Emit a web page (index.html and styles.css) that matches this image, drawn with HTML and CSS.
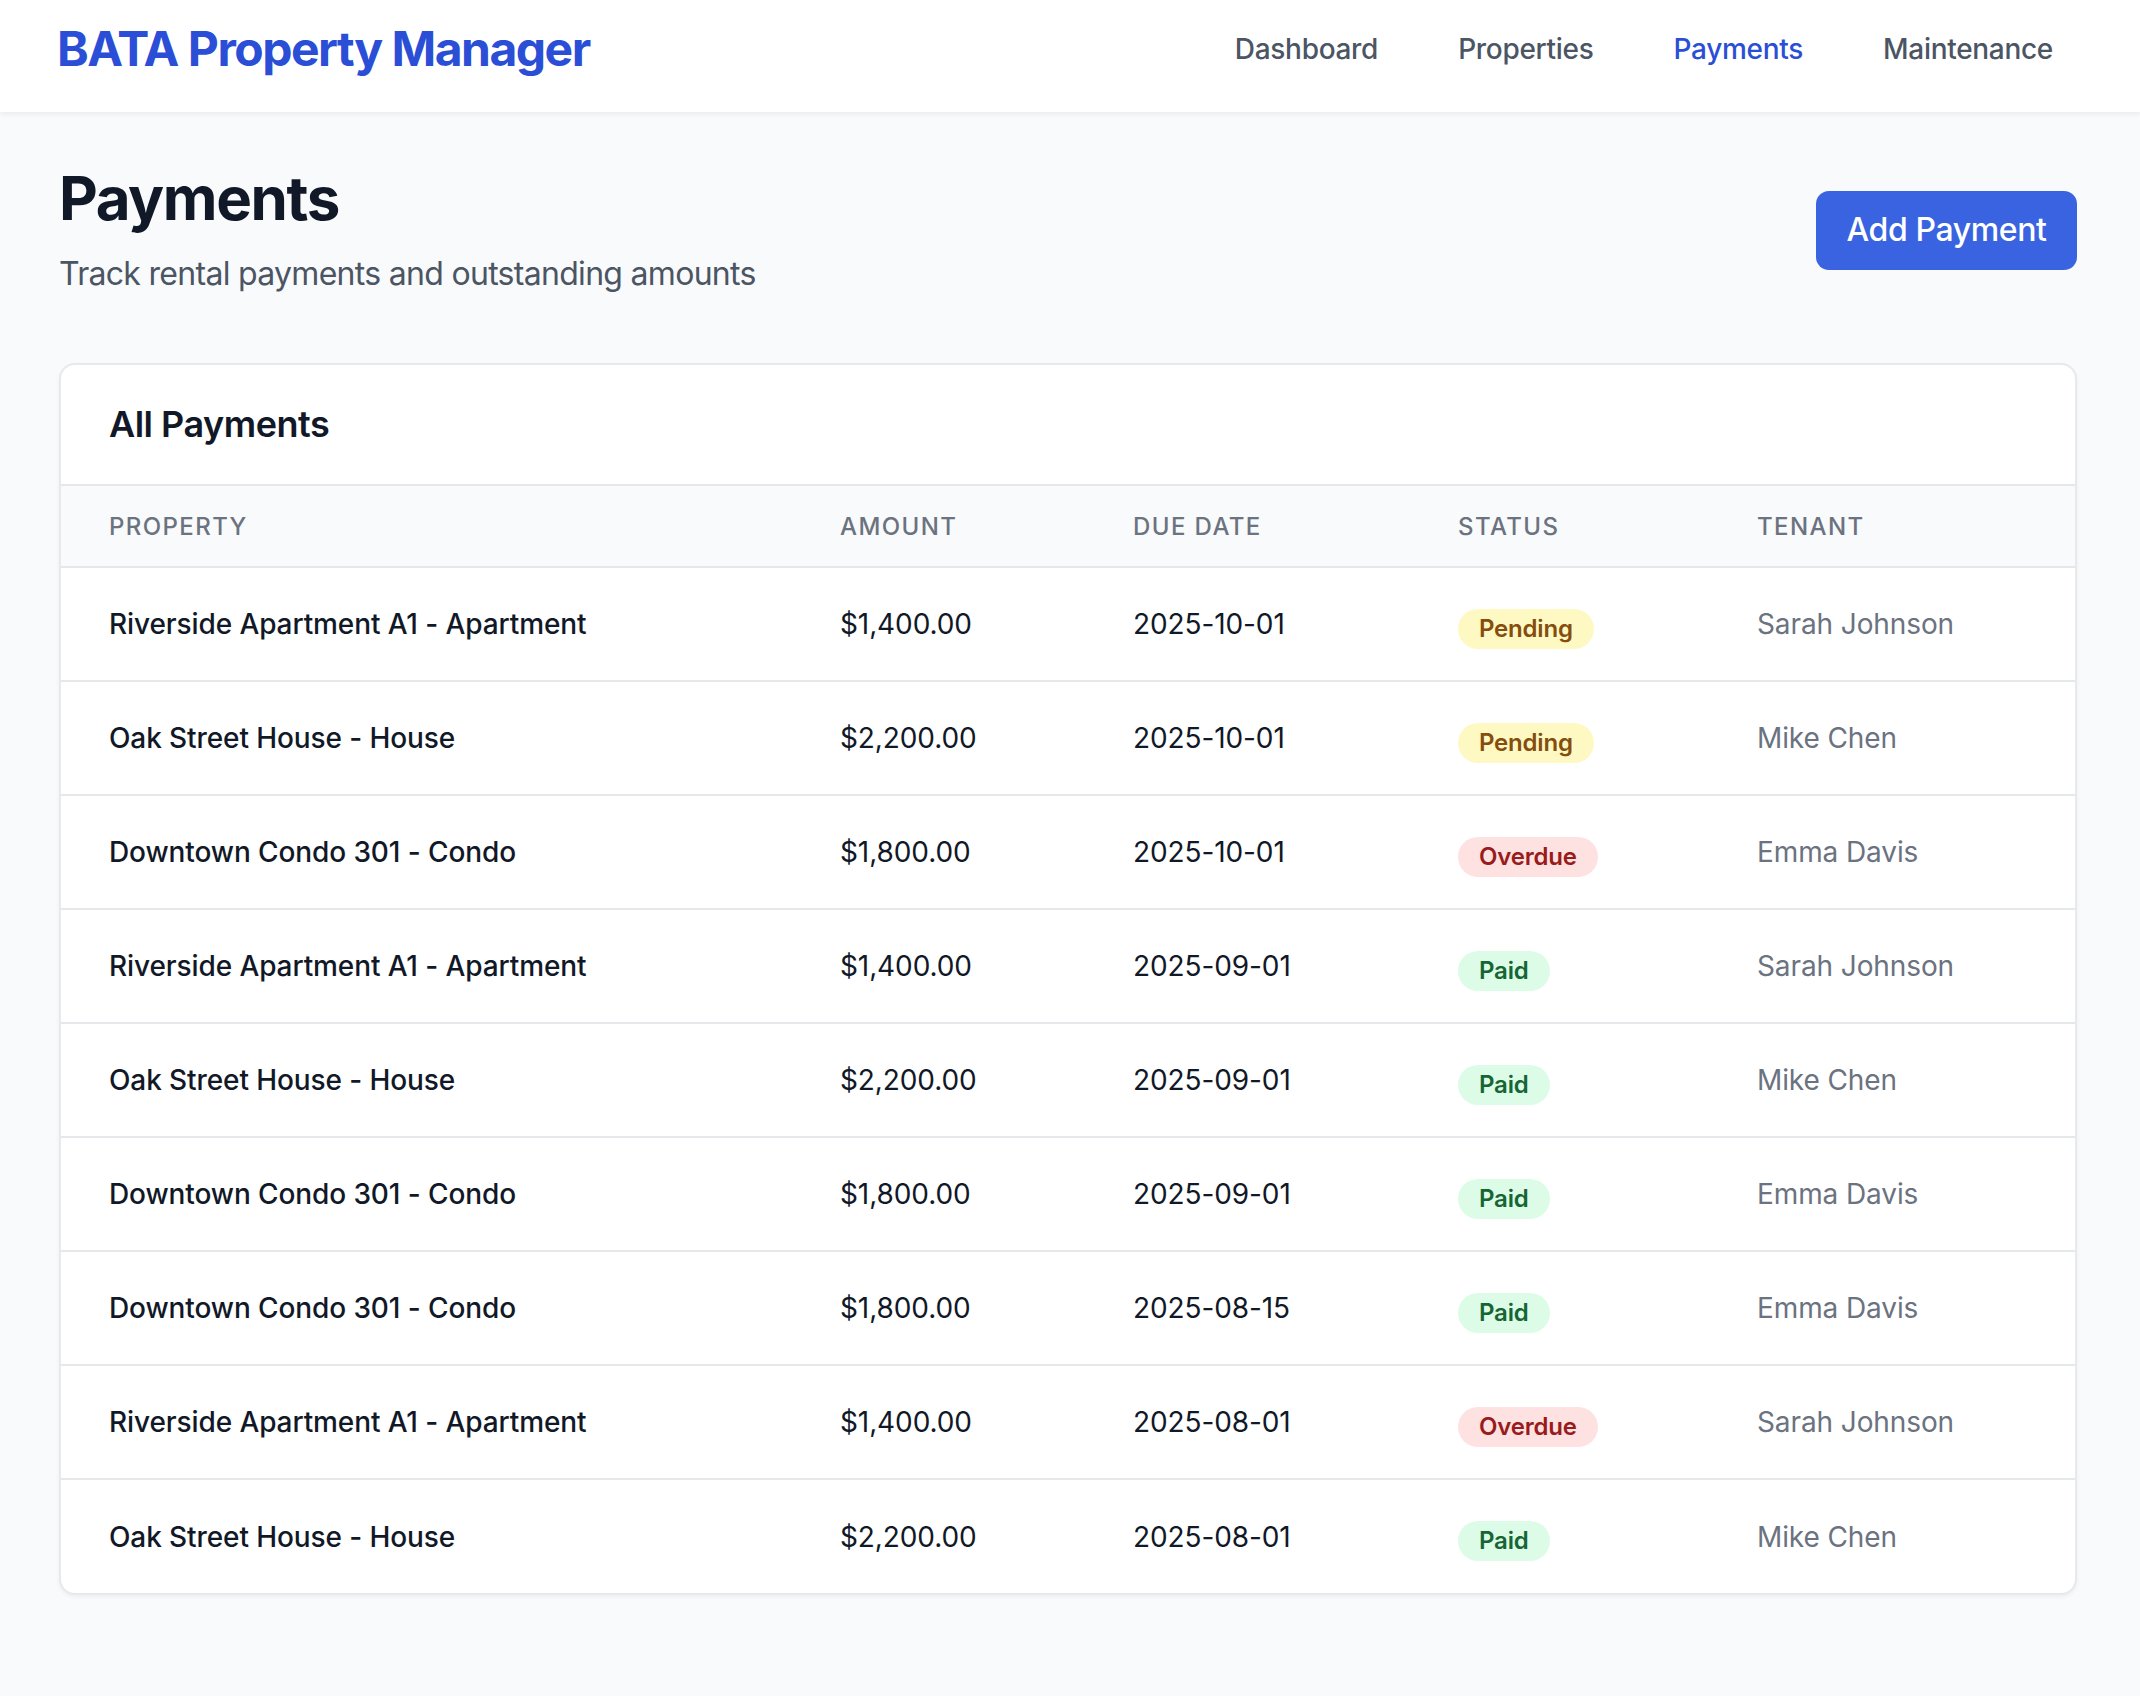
FILE: index.html
```html
<!DOCTYPE html>
<html lang="en">
<head>
<meta charset="utf-8">
<title>BATA Property Manager - Payments</title>
<link rel="stylesheet" href="styles.css">
</head>
<body>
<header class="topbar">
  <div class="topbar-inner">
    <a class="brand" href="#">BATA Property Manager</a>
    <nav class="nav">
      <a class="nav-link" href="#">Dashboard</a>
      <a class="nav-link" href="#">Properties</a>
      <a class="nav-link active" href="#">Payments</a>
      <a class="nav-link" href="#">Maintenance</a>
    </nav>
  </div>
</header>
<main class="main">
  <div class="page-head">
    <div class="page-title">
      <h1>Payments</h1>
      <p class="subtitle">Track rental payments and outstanding amounts</p>
    </div>
    <button class="btn-primary" type="button">Add Payment</button>
  </div>

  <section class="card">
    <div class="card-head">
      <h2>All Payments</h2>
    </div>
    <table class="table">
      <colgroup>
        <col class="c-prop"><col class="c-amt"><col class="c-date"><col class="c-status"><col class="c-tenant">
      </colgroup>
      <thead>
        <tr><th>Property</th><th>Amount</th><th>Due Date</th><th>Status</th><th>Tenant</th></tr>
      </thead>
      <tbody>
        <tr><td class="prop">Riverside Apartment A1 - Apartment</td><td>$1,400.00</td><td>2025-10-01</td><td><span class="badge pending">Pending</span></td><td class="tenant">Sarah Johnson</td></tr>
        <tr><td class="prop">Oak Street House - House</td><td>$2,200.00</td><td>2025-10-01</td><td><span class="badge pending">Pending</span></td><td class="tenant">Mike Chen</td></tr>
        <tr><td class="prop">Downtown Condo 301 - Condo</td><td>$1,800.00</td><td>2025-10-01</td><td><span class="badge overdue">Overdue</span></td><td class="tenant">Emma Davis</td></tr>
        <tr><td class="prop">Riverside Apartment A1 - Apartment</td><td>$1,400.00</td><td>2025-09-01</td><td><span class="badge paid">Paid</span></td><td class="tenant">Sarah Johnson</td></tr>
        <tr><td class="prop">Oak Street House - House</td><td>$2,200.00</td><td>2025-09-01</td><td><span class="badge paid">Paid</span></td><td class="tenant">Mike Chen</td></tr>
        <tr><td class="prop">Downtown Condo 301 - Condo</td><td>$1,800.00</td><td>2025-09-01</td><td><span class="badge paid">Paid</span></td><td class="tenant">Emma Davis</td></tr>
        <tr><td class="prop">Downtown Condo 301 - Condo</td><td>$1,800.00</td><td>2025-08-15</td><td><span class="badge paid">Paid</span></td><td class="tenant">Emma Davis</td></tr>
        <tr><td class="prop">Riverside Apartment A1 - Apartment</td><td>$1,400.00</td><td>2025-08-01</td><td><span class="badge overdue">Overdue</span></td><td class="tenant">Sarah Johnson</td></tr>
        <tr><td class="prop">Oak Street House - House</td><td>$2,200.00</td><td>2025-08-01</td><td><span class="badge paid">Paid</span></td><td class="tenant">Mike Chen</td></tr>
      </tbody>
    </table>
  </section>
</main>
</body>
</html>
```

FILE: styles.css
```css
* { box-sizing: border-box; }

html, body {
  margin: 0;
  padding: 0;
}

body {
  background: #f9fafb;
  font-family: Inter, "Noto Sans", "Liberation Sans", sans-serif;
  color: #111827;
  min-height: 1696px;
}

/* Header */
.topbar {
  background: #ffffff;
  height: 112px;
  box-shadow: 0 2px 5px rgba(17, 24, 39, 0.07);
  position: relative;
}

.topbar-inner {
  height: 97px;
  display: flex;
  align-items: center;
  justify-content: space-between;
  padding: 0 63px 0 57px;
}

.brand {
  font-size: 48px;
  line-height: 64px;
  font-weight: 700;
  color: #2a4fd6;
  text-decoration: none;
  letter-spacing: -1.5px;
}

.nav {
  display: flex;
  gap: 32px;
}

.nav-link {
  font-size: 28px;
  line-height: 40px;
  font-weight: 500;
  color: #4b5563;
  text-decoration: none;
  padding: 0 24px;
  letter-spacing: -0.3px;
}

.nav-link.active {
  color: #2a4fd6;
}

/* Main */
.main {
  padding: 50px 63px 80px 59px;
}

.page-head {
  display: flex;
  align-items: center;
  justify-content: space-between;
  margin-bottom: 65px;
}

.page-title h1 {
  margin: 0;
  font-size: 60px;
  line-height: 72px;
  font-weight: 700;
  color: #111827;
  letter-spacing: -1.4px;
}

.subtitle {
  margin: 16px 0 0;
  font-size: 32px;
  line-height: 48px;
  color: #4b5563;
  letter-spacing: -0.7px;
}

.btn-primary {
  font-family: inherit;
  background: #3a63e1;
  color: #ffffff;
  border: 0;
  border-radius: 13px;
  font-size: 32px;
  line-height: 48px;
  font-weight: 500;
  padding: 15px 0 16px;
  width: 261px;
  text-align: center;
  white-space: nowrap;
  letter-spacing: -0.4px;
  cursor: pointer;
}

/* Card */
.card {
  background: #ffffff;
  border: 2px solid #e8e9ed;
  border-radius: 16px;
  box-shadow: 0 2px 4px rgba(17, 24, 39, 0.05);
  overflow: hidden;
}

.card-head {
  padding: 31px 48px 32px;
  border-bottom: 2px solid #e5e7eb;
}

.card-head h2 {
  margin: 0;
  font-size: 36px;
  line-height: 56px;
  font-weight: 600;
  color: #111827;
  letter-spacing: -0.5px;
}

.table {
  width: 100%;
  border-collapse: collapse;
  table-layout: fixed;
}

.c-prop { width: 731px; }
.c-amt { width: 293px; }
.c-date { width: 325px; }
.c-status { width: 299px; }
.c-tenant { width: auto; }

.table th {
  background: #f9fafb;
  text-align: left;
  font-size: 24px;
  line-height: 32px;
  font-weight: 500;
  color: #6b7280;
  text-transform: uppercase;
  letter-spacing: 1.4px;
  padding: 25px 48px 23px;
  border-bottom: 2px solid #e5e7eb;
}

.table td {
  height: 114px;
  padding: 0 48px;
  font-size: 28px;
  line-height: 40px;
  color: #111827;
  vertical-align: middle;
  white-space: nowrap;
  letter-spacing: -0.1px;
}

.table tbody tr + tr td {
  border-top: 2px solid #e5e7eb;
}

.table td.prop {
  font-weight: 500;
}

.table td.tenant {
  color: #6b7280;
}

.badge {
  display: inline-block;
  vertical-align: -7px;
  font-size: 24px;
  line-height: 40px;
  font-weight: 600;
  padding: 0 21px;
  border-radius: 999px;
  letter-spacing: -0.2px;
}

.badge.pending { background: #fef9c3; color: #854d0e; }
.badge.overdue { background: #fee2e2; color: #991b1b; }
.badge.paid { background: #dcfce7; color: #166534; }
```
